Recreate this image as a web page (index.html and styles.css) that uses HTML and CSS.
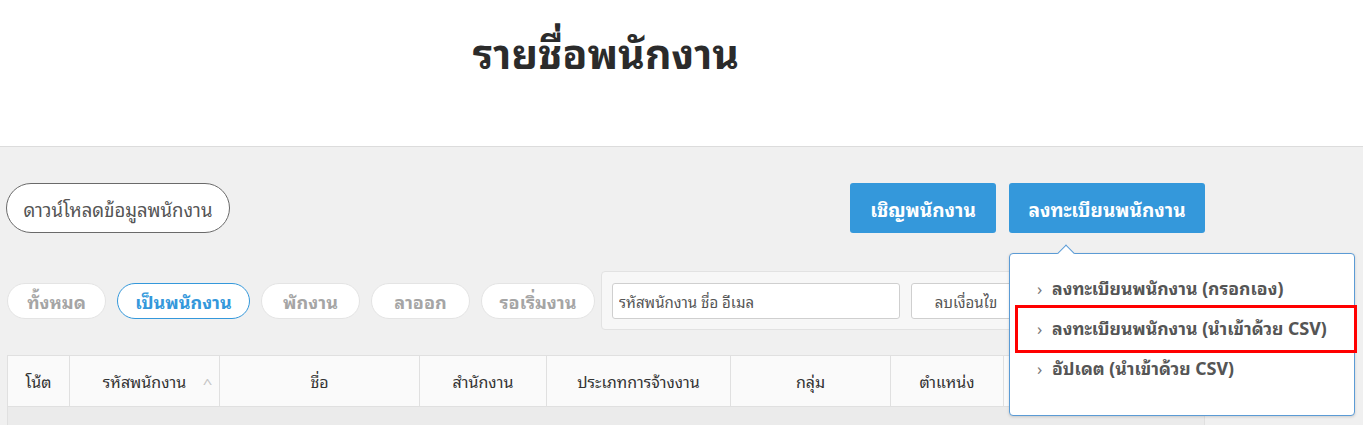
FILE: index.html
```html
<!DOCTYPE html>
<html lang="th">
<head>
<meta charset="utf-8">
<link rel="stylesheet" href="styles.css">
</head>
<body>
<header class="page-head">
  <div class="wrap">
    <h1 class="title">รายชื่อพนักงาน</h1>
  </div>
</header>
<main class="content">
  <div class="wrap">
    <div class="actions">
      <button class="btn-outline">ดาวน์โหลดข้อมูลพนักงาน</button>
      <div class="actions-right">
        <button class="btn-primary">เชิญพนักงาน</button>
        <div class="dd">
          <button class="btn-primary">ลงทะเบียนพนักงาน</button>
          <div class="dd-menu">
            <span class="caret"></span>
            <ul class="dd-list">
              <li class="dd-item"><span class="chev">›</span>ลงทะเบียนพนักงาน (กรอกเอง)</li>
              <li class="dd-item"><span class="chev">›</span>ลงทะเบียนพนักงาน (นำเข้าด้วย CSV)</li>
              <li class="dd-item"><span class="chev">›</span>อัปเดต (นำเข้าด้วย CSV)</li>
            </ul>
            <span class="highlight"></span>
          </div>
        </div>
      </div>
    </div>
    <div class="filters">
      <button class="pill">ทั้งหมด</button>
      <button class="pill active">เป็นพนักงาน</button>
      <button class="pill">พักงาน</button>
      <button class="pill">ลาออก</button>
      <button class="pill last">รอเริ่มงาน</button>
      <div class="search">
        <input class="search-input" type="text" placeholder="รหัสพนักงาน ชื่อ อีเมล">
        <button class="btn-clear">ลบเงื่อนไข</button>
      </div>
    </div>
    <table class="grid">
      <thead>
        <tr>
          <th class="c-note">โน้ต</th>
          <th class="c-code">รหัสพนักงาน<span class="sort">^</span></th>
          <th class="c-name">ชื่อ</th>
          <th class="c-office">สำนักงาน</th>
          <th class="c-type">ประเภทการจ้างงาน</th>
          <th class="c-group">กลุ่ม</th>
          <th class="c-pos">ตำแหน่ง</th>
          <th class="c-more"></th>
        </tr>
      </thead>
      <tbody>
        <tr class="row-empty"><td colspan="8"></td></tr>
      </tbody>
    </table>
  </div>
</main>
</body>
</html>
```
FILE: styles.css
```css
* { box-sizing: border-box; }
html, body { margin: 0; padding: 0; }
body {
  font-family: "Noto Sans Thai Looped", "Noto Sans Thai", "Noto Sans", sans-serif;
  background: #f0f0f0;
  color: #333;
  height: 425px;
  overflow: hidden;
}
.wrap { width: 1212px; padding: 0 7px; }
.page-head {
  background: #fff;
  height: 147px;
  border-bottom: 1px solid #dcdcdc;
}
.page-head .wrap { padding-top: 21px; }
.title {
  margin: 0;
  text-align: center;
  font-size: 41px;
  font-weight: bold;
  color: #2b2b2b;
  line-height: 60px;
}
.content { padding-top: 36px; }
.actions {
  display: flex;
  justify-content: space-between;
  align-items: flex-start;
  height: 50px;
}
.btn-outline {
  font: inherit;
  height: 50px;
  width: 224px;
  margin-left: -1px;
  padding: 0;
  border: 1px solid #6a6a6a;
  border-radius: 25px;
  background: #fff;
  color: #555;
  font-size: 18.5px;
}
.actions-right { display: flex; gap: 13px; }
.btn-primary {
  font: inherit;
  font-size: 19px;
  font-weight: bold;
  height: 50px;
  border: none;
  border-radius: 3px;
  background: #3498db;
  color: #fff;
  padding: 0;
}
.actions-right > .btn-primary { width: 146px; }
.dd { position: relative; }
.dd > .btn-primary { width: 196px; }
.dd-menu {
  position: absolute;
  left: 0;
  top: 70px;
  width: 346px;
  height: 163px;
  background: #fff;
  border: 1px solid #5b9bd5;
  border-radius: 4px;
  box-shadow: 0 1px 3px rgba(0,0,0,0.15);
  z-index: 10;
}
.caret {
  position: absolute;
  left: 50px;
  top: -7px;
  width: 12px;
  height: 12px;
  background: #fff;
  border-left: 1px solid #5b9bd5;
  border-top: 1px solid #5b9bd5;
  transform: rotate(45deg);
}
.dd-list { list-style: none; margin: 0; padding: 13px 0 0 0; }
.dd-item {
  height: 40px;
  line-height: 40px;
  padding-left: 27px;
  font-size: 17.6px;
  font-weight: bold;
  color: #555;
  white-space: nowrap;
}
.chev {
  display: inline-block;
  width: 15px;
  font-weight: normal;
  color: #777;
  font-size: 17px;
}
.highlight {
  position: absolute;
  left: 5px;
  top: 51px;
  width: 342px;
  height: 48px;
  border: 3px solid #ff0000;
}
.filters {
  display: flex;
  align-items: center;
  margin-top: 38px;
  height: 59px;
}
.pill {
  font: inherit;
  font-size: 18px;
  font-weight: bold;
  height: 36px;
  width: 99px;
  padding: 0;
  margin-right: 11px;
  border: 1px solid #e4e4e4;
  border-radius: 18px;
  background: #fff;
  color: #a5a5a5;
}
.pill.active {
  border-color: #3498db;
  color: #3498db;
  width: 133px;
}
.pill.last { width: 114px; margin-right: 6px; }
.search {
  display: flex;
  align-items: center;
  gap: 11px;
  height: 59px;
  padding: 0 10px;
  background: #f7f7f7;
  border: 1px solid #e2e2e2;
  border-radius: 4px;
}
.search-input {
  font: inherit;
  font-size: 15px;
  width: 288px;
  height: 36px;
  padding: 0 6px;
  border: 1px solid #cfcfcf;
  border-radius: 3px;
  background: #fff;
  color: #555;
}
.search-input::placeholder { color: #555; }
.btn-clear {
  font: inherit;
  font-size: 15px;
  width: 110px;
  height: 36px;
  border: 1px solid #cfcfcf;
  border-radius: 3px;
  background: #fff;
  color: #555;
}
.grid {
  margin-top: 25px;
  width: 1198px;
  border-collapse: collapse;
  table-layout: fixed;
}
.grid th {
  position: relative;
  height: 51px;
  background: #fafafa;
  border: 1px solid #e0e0e0;
  font-weight: normal;
  font-size: 16px;
  color: #333;
  text-align: center;
}
.c-note { width: 62px; }
.c-code { width: 150px; }
.c-name { width: 200px; }
.c-office { width: 127px; }
.c-type { width: 184px; }
.c-group { width: 160px; }
.c-pos { width: 113px; }
.sort {
  position: absolute;
  right: 8px;
  top: 17px;
  color: #c5c5c5;
  font-size: 12px;
  transform: scaleX(1.4);
}
.row-empty td {
  height: 30px;
  background: #ebebeb;
  border-left: 1px solid #e0e0e0;
  border-right: 1px solid #e0e0e0;
}
```
